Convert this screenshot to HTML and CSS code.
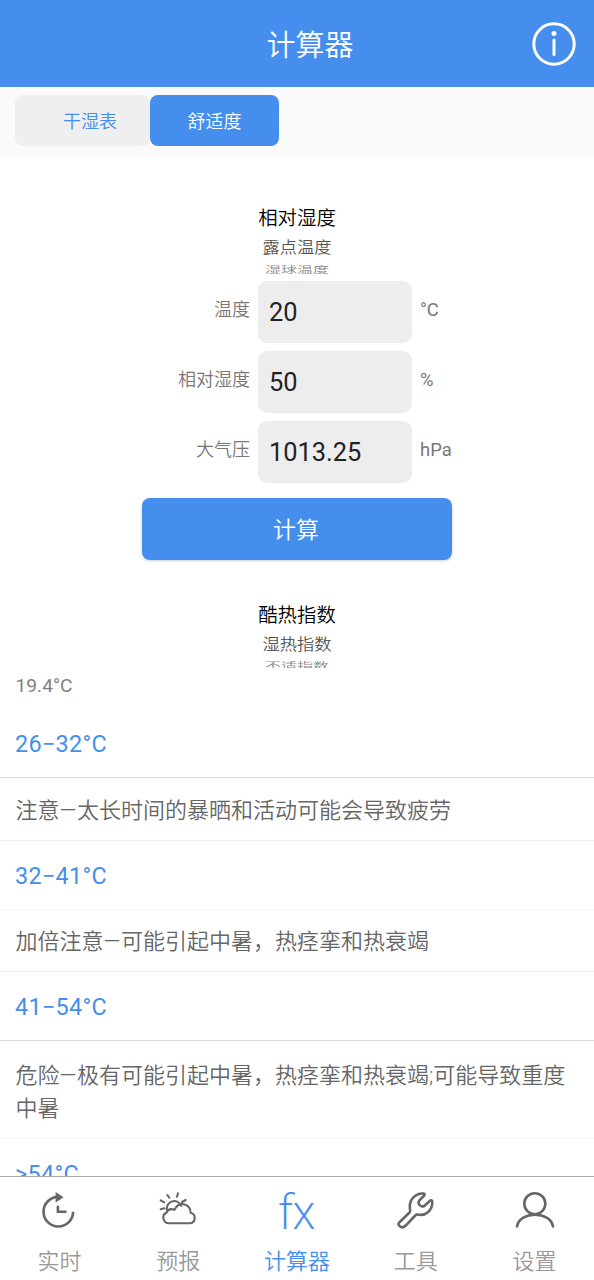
FILE: index.html
```
<!DOCTYPE html>
<html lang="zh-CN">
<head>
<meta charset="utf-8">
<title>计算器</title>
<link rel="stylesheet" href="styles.css">
</head>
<body>
<div class="app">
  <header class="navbar">
    <h1 class="title">计算器</h1>
    <svg class="info" viewBox="0 0 44 44"><circle cx="22" cy="22" r="20.2"/><path d="M22 18v14.500"/><circle class="dot" cx="22" cy="11.500" r="2.500"/></svg>
  </header>
  <nav class="segments">
    <button class="segment">干湿表</button>
    <button class="segment active">舒适度</button>
  </nav>
  <main class="content">
    <div class="picker picker-input">
      <span class="current">相对湿度</span>
      <span class="next">露点温度</span>
      <span class="last"><span class="squash">湿球温度</span></span>
    </div>
    <div class="form">
      <div class="field"><label>温度</label><span class="value">20</span><span class="unit">°C</span></div>
      <div class="field"><label>相对湿度</label><span class="value">50</span><span class="unit">%</span></div>
      <div class="field"><label>大气压</label><span class="value">1013.25</span><span class="unit">hPa</span></div>
    </div>
    <button class="submit">计算</button>
    <div class="picker picker-output">
      <span class="current">酷热指数</span>
      <span class="next">湿热指数</span>
      <span class="last"><span class="squash">不适指数</span></span>
    </div>
    <p class="result">19.4°C</p>
    <dl class="levels">
      <dt class="strong">26−32°C</dt>
      <dd>注意<span class="dash">—</span>太长时间的暴晒和活动可能会导致疲劳</dd>
      <dt>32−41°C</dt>
      <dd class="short">加倍注意<span class="dash">—</span>可能引起中暑，热痉挛和热衰竭</dd>
      <dt class="strong">41−54°C</dt>
      <dd class="tall">危险<span class="dash">—</span>极有可能引起中暑，热痉挛和热衰竭;可能导致重度中暑</dd>
      <dt>&gt;54°C</dt>
    </dl>
  </main>
  <nav class="tabbar">
    <a class="tab"><svg class="clock" viewBox="0 0 40 40"><path d="M19.300 5.900A14.800 14.800 0 1 0 34.100 20.700M18.900 14.800v5.900h8.600"/><path class="solid" d="M16.600 1v10.600l8-5.300z"/></svg><span>实时</span></a>
    <a class="tab"><svg class="weather" viewBox="0 0 40 40"><path d="M11 32.300A5.700 5.700 0 0 1 8.500 21.500Q10 17.800 14 18.100q1.300 0 2.600.7A8.200 8.200 0 0 1 32.600 21.700A5.400 5.400 0 0 1 32 32.300zM9.300 20.500A7.500 7.500 0 1 1 23.400 14.800M2.700 18.300l3.600-1M2.700 9.300l3.600 2M9.300 4l2 2.700M20 2.300l-1 3.400M27.700 9L24 11"/></svg><span>预报</span></a>
    <a class="tab active"><span class="fx">fx</span><span>计算器</span></a>
    <a class="tab"><svg viewBox="0 0 40 40"><path d="M3.500 31.300L13.500 21.500Q14.800 20.200 14 18.500C12.500 9 19 2 27.500 2.500Q29.300 3 28.200 4.500L23.200 9.700Q21.800 11.500 23.500 13.800 26 16.500 28.500 14.800L34.300 9.500Q36.300 8.700 36.300 11C36.500 19.500 29.500 25.500 21.500 23.500Q20.200 23.300 19.200 24.500L9.500 34.800Q6.500 37.500 3.800 35.300 1.300 33 3.500 31.300z"/></svg><span>工具</span></a>
    <a class="tab"><svg viewBox="0 0 40 40"><circle cx="19.800" cy="12.700" r="10.500"/><path d="M2 35.500C4.500 19.800 35.500 19.800 38 35.500"/></svg><span>设置</span></a>
  </nav>
</div>
</body>
</html>
```
FILE: styles.css
```
* { box-sizing: border-box; }
body { margin: 0; background: #fff; font-family: Roboto, "Noto Sans CJK SC DemiLight", "Noto Sans CJK SC", sans-serif; font-weight: 350; }
button { border: 0; font: inherit; }
.app { width: 594px; height: 1280px; display: flex; flex-direction: column; overflow: hidden; }

.navbar { height: 87px; flex: none; display: grid; grid-template-columns: 80px 1fr 80px; align-items: center; background: #458eee; color: #fff; }
.title { grid-column: 2; margin: 0; padding: 4px 0 0 26px; text-align: center; font-size: 29px; font-weight: inherit; line-height: 40px; }
.info { width: 44px; height: 44px; margin-left: 18px; fill: none; stroke: #fff; stroke-width: 3; stroke-linecap: round; }
.info .dot { fill: #fff; stroke: none; }

.segments { height: 70px; flex: none; display: flex; padding: 8px 15px 0; background: #fafafa; }
.segment { width: 135px; height: 51px; padding: 0 0 1px 15px; border-radius: 8px; background: #efefef; color: #458eee; font-size: 18px; }
.segment.active { width: 129px; padding-left: 0; background: #458eee; color: #fff; }

.content { flex: 1; min-height: 0; overflow: hidden; }
.picker { display: flex; flex-direction: column; align-items: center; height: 124px; padding-top: 47px; }
.picker-output { height: 109px; padding-top: 41px; }
.current { height: 30px; line-height: 30px; font-size: 19.400px; color: #000; }
.next { height: 28px; line-height: 28px; font-size: 17.200px; color: #555; transform: scaleY(.9); }
.last { height: 14px; line-height: 17px; overflow: hidden; font-size: 16px; color: #888; }
.picker-output .last { height: 9px; }
.squash { display: block; transform: translateY(-1px) scaleY(.6); }
.picker-output .squash { transform: translateY(-2px) scaleY(.55); }

.form { display: flex; flex-direction: column; gap: 8px; }
.field { display: grid; grid-template-columns: 250px 154px 1fr; grid-template-rows: 62px; column-gap: 8px; height: 62px; font-size: 18px; line-height: 58px; color: #777; }
.field label { text-align: right; }
.unit { font-size: 18.400px; font-weight: 400; }
.value { padding-left: 11px; border-radius: 9px; background: #ededed; color: #222; font-size: 25.400px; font-weight: 400; line-height: 63px; }
.submit { display: block; width: 310px; height: 62px; margin: 15px 0 0 142px; padding: 0 2px 2px 0; border-radius: 8px; background: #458eee; color: #fff; font-size: 23px; box-shadow: 0 1px 3px #0003; }

.result { margin: 0; padding-left: 15.500px; height: 40px; line-height: 33px; font-size: 19.200px; font-weight: 400; color: #808080; }
.levels { margin: 0; }
.levels dt { height: 69px; padding-left: 15px; border-bottom: 1px solid #f7f7f7; color: #458eee; font-size: 23.400px; font-weight: 400; letter-spacing: .3px; line-height: 71px; }
.levels dt.strong { border-bottom-color: #ddd; }
.levels dd { height: 63px; margin: 0; padding: 16px 0 0 15.500px; border-bottom: 1px solid #eee; color: #666; font-size: 22px; line-height: 33px; }
.levels dd.short { height: 62px; padding-top: 15px; }
.levels dd.tall { height: 98px; padding-top: 18px; padding-right: 20px; border-bottom-color: #f7f7f7; }
.dash { letter-spacing: .5px; }

.tabbar { height: 104px; flex: none; display: grid; grid-template-columns: repeat(5, 1fr); border-top: 1px solid #aaa; background: #fff; }
.tab { display: flex; flex-direction: column; align-items: center; padding-top: 14px; color: #999; font-size: 22px; line-height: 32px; }
.tab svg { width: 40px; height: 40px; margin-bottom: 15px; fill: none; stroke: #666; stroke-width: 2.600; stroke-linecap: round; stroke-linejoin: round; }
.tab svg.weather { stroke-width: 2.100; }
.tab svg.clock { stroke-linecap: butt; stroke-linejoin: miter; }
.tab svg .solid { fill: #666; stroke: none; }
.tab.active { color: #458eee; }
.fx { height: 40px; margin-bottom: 15px; font-family: "Open Sans", sans-serif; font-size: 46px; line-height: 38px; transform: scaleY(1.06); }
```
